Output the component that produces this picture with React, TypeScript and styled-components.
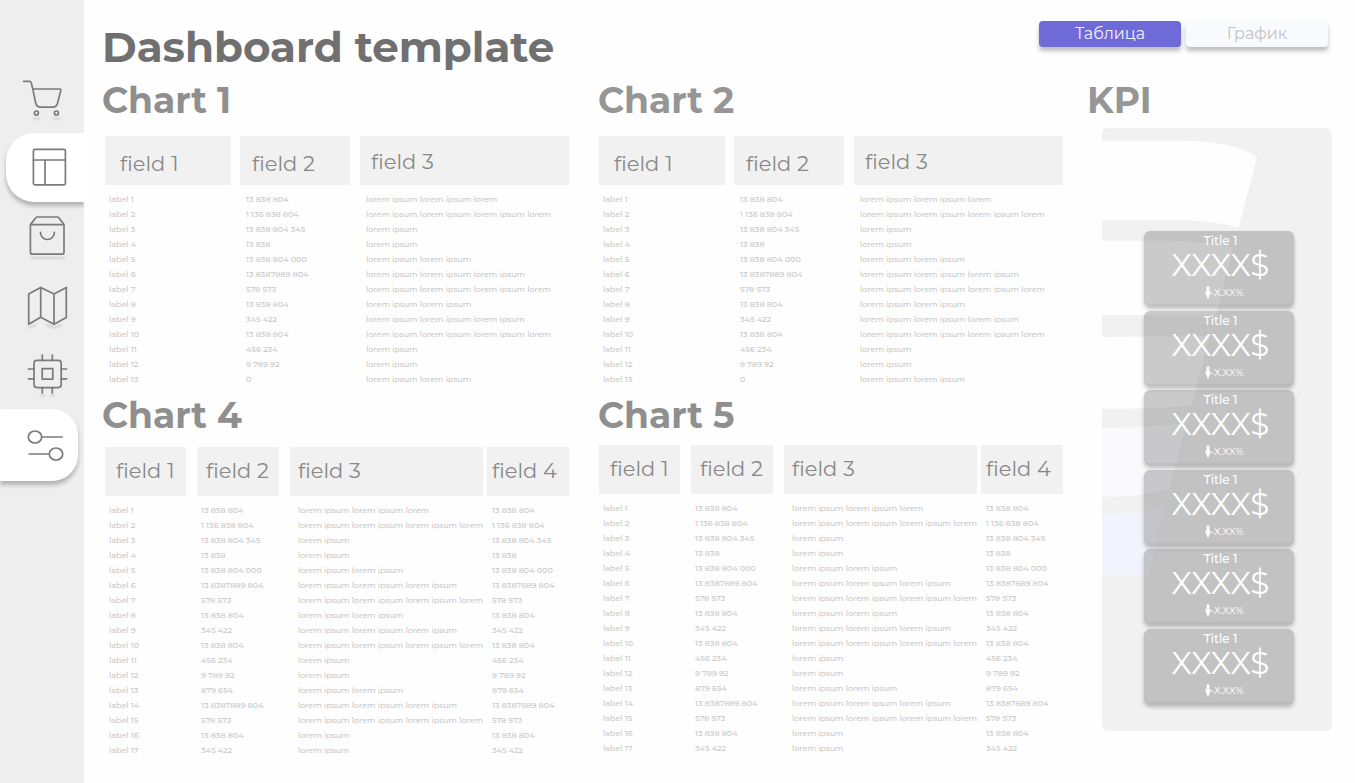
import React, { useState } from "react";
import styled, { createGlobalStyle, css } from "styled-components";

const GlobalStyle = createGlobalStyle`
  *, *::before, *::after { box-sizing: border-box; }
  body {
    margin: 0;
    background: #fefefe;
    font-family: Montserrat, Inter, "Open Sans", sans-serif;
    color: #8c8c8c;
  }
`;

/* ---------- page ---------- */

const Page = styled.div`
  display: flex;
  min-height: 100vh;
`;

const Main = styled.main`
  flex: 1;
  min-width: 0;
  padding: 0 23px 26px 21px;
`;

const Header = styled.header`
  display: flex;
  justify-content: space-between;
  align-items: flex-start;
  height: 80px;
  padding: 21px 4px 0 0;
`;

const PageTitle = styled.h1`
  margin: 0 0 0 -3px;
  font-size: 42px;
  line-height: 52px;
  font-weight: 700;
  color: #707070;
`;

const Content = styled.div`
  display: flex;
  gap: 25px;
`;

const Charts = styled.div`
  flex: 1;
  min-width: 0;
  display: grid;
  grid-template-columns: 1fr 1fr;
  gap: 8px 30px;
  align-content: start;
`;

/* ---------- sidebar ---------- */

const Sidebar = styled.nav`
  flex: none;
  width: 84px;
  padding-top: 64px;
  background: #eeeeee;
  overflow: hidden;
`;

const NavLink = styled.a<{ $tab?: "left" | "right" }>`
  display: flex;
  align-items: center;
  height: 69px;
  padding-left: 23px;
  color: #7b7b7b;

  ${(p) =>
    p.$tab === "left" &&
    css`
      margin-left: 6px;
      padding-left: 17px;
      background: #ffffff;
      border-radius: 28px 0 0 28px;
      box-shadow: 0 4px 4px rgba(0, 0, 0, 0.25);
    `}
  ${(p) =>
    p.$tab === "right" &&
    css`
      height: 72px;
      margin-right: 6px;
      background: #ffffff;
      border-radius: 0 26px 26px 0;
      box-shadow: 0 4px 4px rgba(0, 0, 0, 0.25);
    `}
`;

const Glyph = styled.svg`
  width: 48px;
  height: 49px;
  overflow: visible;
  fill: none;
  stroke: currentColor;
  stroke-width: 1.7;
  stroke-linecap: round;
  stroke-linejoin: round;
`;

const Shade = styled.g`
  stroke: #000000;
  stroke-width: 2;
  opacity: 0.13;
  filter: blur(1px);
`;

const CartIcon = () => (
  <Glyph viewBox="0 0 48 49" aria-hidden="true">
    <Shade>
      <path d="M10.5 44.5h6M30.5 44.5h6" />
    </Shade>
    <path d="M0.7 7.4h5.6q1.6 0 2 1.6L9.8 15l2.8 13.8q1 4.4 5 4.4h12q4 0 5-4.2L37.8 16.4q.3-1.4-1.2-1.4H9.8" />
    <circle cx="13.4" cy="39" r="2" />
    <circle cx="33.4" cy="39" r="2" />
  </Glyph>
);

const LayoutIcon = () => (
  <Glyph viewBox="0 0 48 49" aria-hidden="true">
    <rect x="10.4" y="6.4" width="32" height="35.4" rx="1.6" />
    <path d="M10.4 17h32M22 17v24.8" />
  </Glyph>
);

const BagIcon = () => (
  <Glyph viewBox="0 0 48 49" aria-hidden="true">
    <Shade>
      <path d="M8 46h33" />
    </Shade>
    <path d="M7.4 12.6 12.6 6q.7-1 1.8-1h19.8q1.1 0 1.8 1l5 6.6M7.4 12.6H41v27.6q0 2-2 2H9.4q-2 0-2-2z" />
    <path d="M17.4 20.3a7 7.2 0 0 0 14 0" />
  </Glyph>
);

const MapIcon = () => (
  <Glyph viewBox="0 0 48 49" aria-hidden="true">
    <Shade>
      <path d="M6 46.5l6-2.4M24 44l7 2.6 7-2.6" />
    </Shade>
    <path d="M5.7 13l12-6.6L31 13l12.3-6.6v30L31 43.3l-13.3-7-12 7zM17.7 6.4v29.9M31 13v30.3" />
  </Glyph>
);

const ChipIcon = () => (
  <Glyph viewBox="0 0 48 49" aria-hidden="true">
    <Shade>
      <path d="M18 45.5h3M28 45.5h3" />
    </Shade>
    <rect x="11" y="10.4" width="27.2" height="27.2" rx="3" />
    <rect x="19.2" y="18.6" width="10.6" height="10.6" />
    <path d="M19.3 10.4V5M29.3 10.4V5M19.3 37.6V43M29.3 37.6V43M11 19H5.4M11 28.8H5.4M38.2 19h5.4M38.2 28.8h5.4" />
  </Glyph>
);

const SlidersIcon = () => (
  <Glyph viewBox="0 0 48 49" aria-hidden="true">
    <ellipse cx="12" cy="16" rx="6.7" ry="6" />
    <path d="M19 16h20.2M6.2 33H26" />
    <ellipse cx="33" cy="33" rx="6.7" ry="6" />
  </Glyph>
);

/* ---------- view switch ---------- */

const Switch = styled.div`
  display: flex;
  gap: 5px;
`;

const SwitchButton = styled.button<{ $on: boolean }>`
  width: 142px;
  height: 26px;
  padding: 0;
  border: 0;
  border-radius: 4px;
  font-family: inherit;
  font-size: 16px;
  line-height: 26px;
  font-weight: 400;
  cursor: pointer;
  color: ${(p) => (p.$on ? "#f1f0fc" : "#c3c3c6")};
  background: ${(p) => (p.$on ? "#6e6bd8" : "#f9fafd")};
  box-shadow: 0 4px 4px rgba(0, 0, 0, 0.25);
`;

/* ---------- tables ---------- */

const SectionTitle = styled.h2<{ $gap: number; $outdent: number; $soft?: boolean }>`
  margin: 0 0 ${(p) => p.$gap}px -${(p) => p.$outdent}px;
  font-size: 36px;
  line-height: 40px;
  font-weight: 700;
  color: ${(p) => (p.$soft ? "#969696" : "#8f8f8f")};
`;

const Table = styled.table`
  width: 100%;
  table-layout: fixed;
  border-collapse: collapse;
`;

const Column = styled.col<{ $width?: number }>`
  width: ${(p) => (p.$width ? `${p.$width}px` : "auto")};
`;

const HeadCell = styled.th<{ $gap: number }>`
  padding: 0 ${(p) => p.$gap}px 7px 0;
  text-align: left;
  font-weight: 400;
`;

const HeadBox = styled.div<{ $pad: number; $drop: number }>`
  height: 49px;
  padding: ${(p) => p.$drop}px 0 0 ${(p) => p.$pad}px;
  background: #f1f1f1;
  font-size: 21px;
  line-height: 47px;
  white-space: nowrap;
  color: #888888;
`;

const Cell = styled.td<{ $pad: number }>`
  height: 15px;
  padding: 0 0 0 ${(p) => p.$pad}px;
  font-size: 8px;
  line-height: 15px;
  font-weight: 500;
  white-space: nowrap;
  color: #c8c8c8;
`;

type ColumnSpec = {
  width?: number;
  gap: number;
  headPad: number;
  headDrop: number;
  cellPad: number;
};

const wideColumns: ColumnSpec[] = [
  { width: 135, gap: 9, headPad: 15, headDrop: 4, cellPad: 4 },
  { width: 120, gap: 10, headPad: 12, headDrop: 4, cellPad: 6 },
  { gap: 0, headPad: 11, headDrop: 2, cellPad: 6 },
];

const narrowColumns: ColumnSpec[] = [
  { width: 92, gap: 11, headPad: 11, headDrop: 0, cellPad: 4 },
  { width: 93, gap: 11, headPad: 9, headDrop: 0, cellPad: 4 },
  { gap: 4, headPad: 8, headDrop: 0, cellPad: 8 },
  { width: 82, gap: 0, headPad: 5, headDrop: 0, cellPad: 5 },
];

const amounts = [
  "13 838 804", "1 136 838 804", "13 838 804 345", "13 838", "13 838 804 000",
  "13 8387889 804", "578 573", "13 838 804", "345 422", "13 838 804", "456 234", "9 789 92",
];
const shortAmounts = [...amounts, "0"];
const longAmounts = [...amounts, "879 654", "13 8387889 804", "578 573", "13 838 804", "345 422"];

const wordCounts = [5, 7, 2, 2, 4, 6, 7, 4, 6, 7, 2, 2, 4, 6, 7, 2, 2];
const lorem = (count: number) =>
  Array.from({ length: count }, (_, i) => (i % 2 ? "ipsum" : "lorem")).join(" ");

const shortRows = shortAmounts.map((amount, i) => [`label ${i + 1}`, amount, lorem(wordCounts[i])]);
const longRows = longAmounts.map((amount, i) => [
  `label ${i + 1}`, amount, lorem(wordCounts[i]), amount,
]);

type ChartProps = {
  title: string;
  columns: ColumnSpec[];
  rows: string[][];
  gap: number;
  outdent: number;
  soft?: boolean;
};

const ChartTable = ({ title, columns, rows, gap, outdent, soft }: ChartProps) => (
  <section>
    <SectionTitle $gap={gap} $outdent={outdent} $soft={soft}>{title}</SectionTitle>
    <Table aria-label={title}>
      <colgroup>
        {columns.map((c, i) => (
          <Column key={i} $width={c.width} />
        ))}
      </colgroup>
      <thead>
        <tr>
          {columns.map((c, i) => (
            <HeadCell key={i} $gap={c.gap} scope="col">
              <HeadBox $pad={c.headPad} $drop={c.headDrop}>field {i + 1}</HeadBox>
            </HeadCell>
          ))}
        </tr>
      </thead>
      <tbody>
        {rows.map((row) => (
          <tr key={row[0]}>
            {row.map((value, i) => (
              <Cell key={i} $pad={columns[i].cellPad}>
                {value}
              </Cell>
            ))}
          </tr>
        ))}
      </tbody>
    </Table>
  </section>
);

/* ---------- KPI ---------- */

const Aside = styled.aside`
  flex: none;
  width: 244px;
`;

const KpiPanel = styled.div`
  position: relative;
  margin-left: 14px;
  padding: 103px 38px 27px 42px;
  border-radius: 6px;
  background: #f1f1f1;
  overflow: hidden;
`;

const Backdrop = styled.svg`
  position: absolute;
  top: 0;
  left: 0;
  width: 230px;
  height: 603px;
`;

const KpiList = styled.div`
  position: relative;
  display: flex;
  flex-direction: column;
  justify-content: space-between;
  height: 473px;
`;

const KpiCard = styled.div`
  display: flex;
  flex-direction: column;
  align-items: center;
  height: 75px;
  padding: 2px 0 0 3px;
  border-radius: 6px;
  background: rgba(124, 124, 124, 0.4);
  box-shadow: 0 3px 4px rgba(0, 0, 0, 0.25), inset 0 -2px 1px rgba(0, 0, 0, 0.04);
  color: #ffffff;
`;

const KpiName = styled.div`
  font-size: 12px;
  line-height: 15px;
  font-weight: 500;
`;

const KpiValue = styled.div`
  font-size: 31px;
  line-height: 34px;
`;

const KpiDelta = styled.div`
  display: flex;
  align-items: center;
  margin-top: 4px;
  padding-left: 8px;
  font-size: 10px;
  line-height: 14px;
`;

const Arrow = styled.svg`
  width: 6px;
  height: 14px;
  margin-right: -1px;
  fill: #ffffff;
`;

const kpis = Array.from({ length: 6 }, () => ({ name: "Title 1", value: "XXXX$", delta: "-X.XX%" }));

export default function App() {
  const [view, setView] = useState("table");

  return (
    <>
      <GlobalStyle />
      <Page>
        <Sidebar>
          <NavLink href="#shop" aria-label="Shop"><CartIcon /></NavLink>
          <NavLink href="#dashboard" aria-label="Dashboard" $tab="left"><LayoutIcon /></NavLink>
          <NavLink href="#orders" aria-label="Orders"><BagIcon /></NavLink>
          <NavLink href="#map" aria-label="Map"><MapIcon /></NavLink>
          <NavLink href="#devices" aria-label="Devices"><ChipIcon /></NavLink>
          <NavLink href="#filters" aria-label="Filters" $tab="right"><SlidersIcon /></NavLink>
        </Sidebar>
        <Main>
          <Header>
            <PageTitle>Dashboard template</PageTitle>
            <Switch>
              <SwitchButton $on={view === "table"} onClick={() => setView("table")}>
                Таблица
              </SwitchButton>
              <SwitchButton $on={view === "graph"} onClick={() => setView("graph")}>
                График
              </SwitchButton>
            </Switch>
          </Header>
          <Content>
            <Charts>
              <ChartTable title="Chart 1" columns={wideColumns} rows={shortRows} gap={16} outdent={3} />
              <ChartTable title="Chart 2" columns={wideColumns} rows={shortRows} gap={16} outdent={1} soft />
              <ChartTable title="Chart 4" columns={narrowColumns} rows={longRows} gap={12} outdent={3} />
              <ChartTable title="Chart 5" columns={narrowColumns} rows={longRows} gap={10} outdent={1} />
            </Charts>
            <Aside>
              <SectionTitle $gap={8} $outdent={1} $soft>KPI</SectionTitle>
              <KpiPanel>
                <Backdrop viewBox="0 0 230 603" aria-hidden="true">
                  <path fill="#fefefe" d="M0 12.7H80Q132 13 155 29.3L136.4 100.7Q120 92 62 91.7H0z" />
                  <path fill="#fefefe" d="M0 112.7H62Q114 113 131 120L114 187H0z" />
                  <path fill="#fefefe" d="M0 209L107.5 208L89.7 277Q60 281 0 280.7z" />
                  <path fill="#fafafd" d="M0 299.7Q50 300 84.7 295L67.3 361.3Q30 370 0 368.7z" />
                  <path fill="#f3f3fd" d="M0 386.7Q40 386 62.3 377.7L46.3 448H0z" />
                </Backdrop>
                <KpiList>
                  {kpis.map((k, i) => (
                    <KpiCard key={i}>
                      <KpiName>{k.name}</KpiName>
                      <KpiValue>{k.value}</KpiValue>
                      <KpiDelta>
                        <Arrow viewBox="0 0 6 14" aria-hidden="true">
                          <path d="M1.6 0.5h2.8v5H6L3 13.5 0 5.5h1.6z" />
                        </Arrow>
                        {k.delta}
                      </KpiDelta>
                    </KpiCard>
                  ))}
                </KpiList>
              </KpiPanel>
            </Aside>
          </Content>
        </Main>
      </Page>
    </>
  );
}
